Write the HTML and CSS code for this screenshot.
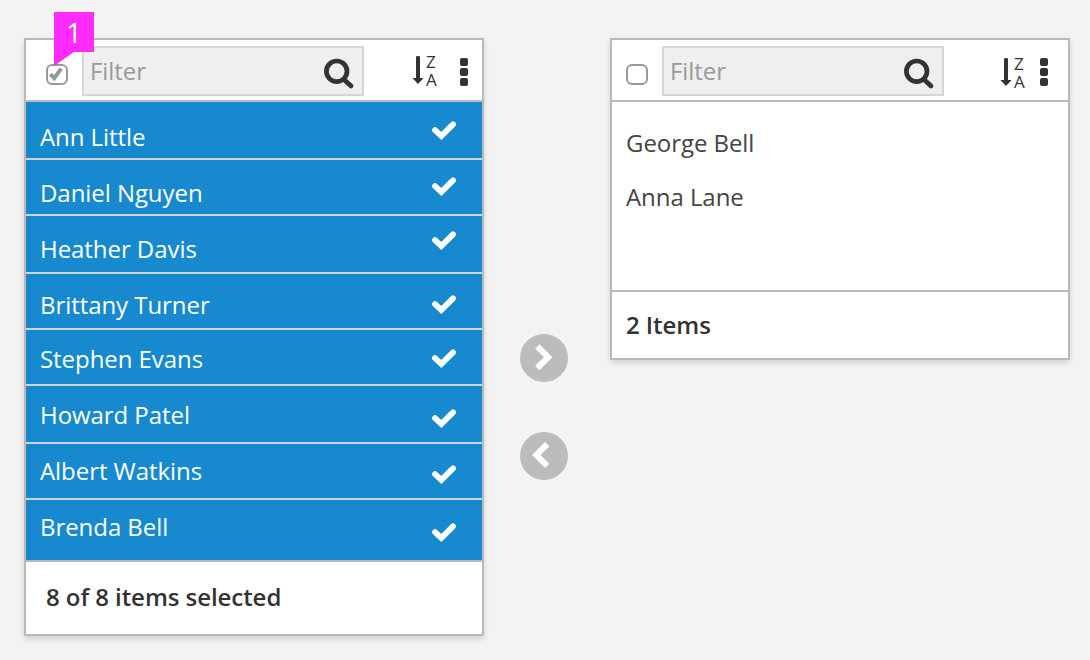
FILE: index.html
```html
<!DOCTYPE html>
<html lang="en">
<head>
<meta charset="utf-8">
<title>List builder</title>
<link rel="stylesheet" href="styles.css">
</head>
<body>
<svg class="defs" aria-hidden="true">
  <symbol id="search" viewBox="0 0 32 32"><circle cx="13.7" cy="13.3" r="10.3" fill="none" stroke="#333" stroke-width="4.7"/><path d="M21 21.4 28 27.9" stroke="#333" stroke-width="4.8" stroke-linecap="round"/></symbol>
  <symbol id="down" viewBox="0 0 12 28"><path d="M5.2 0H6.8Q8 0 8 1.2V22H11.6L6 28 .4 22H4V1.2Q4 0 5.2 0Z" fill="#333"/></symbol>
  <symbol id="check" viewBox="0 0 24 19"><path d="M3 9.2 9.3 15 21 3.4" fill="none" stroke="#fff" stroke-width="5.8" stroke-linecap="round"/></symbol>
</svg>
<main class="builder">
  <section class="panel">
    <header class="bar">
      <span class="box"><svg class="box-tick" viewBox="0 0 14 14"><path d="M1.3 7.2 5.2 11.2 12.2 1.6" fill="none" stroke="#999" stroke-width="4"/></svg></span>
      <div class="filter"><span>Filter</span><svg class="search"><use href="#search"/></svg></div>
      <div class="sort"><svg class="down"><use href="#down"/></svg><div class="letters"><span>Z</span><span>A</span></div></div>
      <div class="kebab"><i></i><i></i><i></i></div>
    </header>
    <ul class="rows">
      <li class="row r1"><span>Ann Little</span><svg class="check"><use href="#check"/></svg></li>
      <li class="row r2"><span>Daniel Nguyen</span><svg class="check"><use href="#check"/></svg></li>
      <li class="row r3"><span>Heather Davis</span><svg class="check"><use href="#check"/></svg></li>
      <li class="row r4"><span>Brittany Turner</span><svg class="check"><use href="#check"/></svg></li>
      <li class="row r5"><span>Stephen Evans</span><svg class="check"><use href="#check"/></svg></li>
      <li class="row r6"><span>Howard Patel</span><svg class="check"><use href="#check"/></svg></li>
      <li class="row r7"><span>Albert Watkins</span><svg class="check"><use href="#check"/></svg></li>
      <li class="row r8"><span>Brenda Bell</span><svg class="check"><use href="#check"/></svg></li>
    </ul>
    <footer class="foot">8 of 8 items selected</footer>
  </section>
  <div class="moves">
    <span class="move"><svg viewBox="0 0 48 48"><path d="M17.3 12.5 28.2 23.2 17.3 34" fill="none" stroke="#fff" stroke-width="6"/></svg></span>
    <span class="move"><svg viewBox="0 0 48 48"><path d="M27.2 12.2 16.3 23 27.2 33.8" fill="none" stroke="#fff" stroke-width="6"/></svg></span>
  </div>
  <section class="panel available">
    <header class="bar">
      <span class="box"></span>
      <div class="filter"><span>Filter</span><svg class="search"><use href="#search"/></svg></div>
      <div class="sort"><svg class="down"><use href="#down"/></svg><div class="letters"><span>Z</span><span>A</span></div></div>
      <div class="kebab"><i></i><i></i><i></i></div>
    </header>
    <ul class="plain"><li>George Bell</li><li>Anna Lane</li></ul>
    <footer class="foot">2 Items</footer>
  </section>
</main>
<div class="marker"><svg viewBox="0 0 40 54"><path d="M0 0H40V40H20L0 54Z" fill="#ff2bff"/></svg><span>1</span></div>
</body>
</html>
```
FILE: styles.css
```css
* { box-sizing: border-box; }
body { margin: 0; height: 660px; overflow: hidden; background: #f3f3f3; font: 24px/32px "Open Sans", sans-serif; letter-spacing: -.06px; color: #444; }
svg { display: block; }
ul { margin: 0; padding: 0; list-style: none; }
.defs { position: absolute; width: 0; height: 0; }
.builder { display: flex; align-items: flex-start; padding: 38px 0 0 24px; }
.panel { width: 460px; border: 2px solid #b9b9b9; background: #fff; box-shadow: 0 3px 6px rgba(0, 0, 0, .14); }
.bar { display: flex; align-items: flex-start; height: 62px; padding: 6px 0 0 20px; border-bottom: 2px solid #b9b9b9; }
.box { width: 22px; height: 21px; margin: 18px 14px 0 0; border: 2px solid #999; border-radius: 6px; }
.box-tick { width: 14px; height: 14px; margin: 1px 0 0 1px; }
.filter { display: flex; justify-content: space-between; width: 282px; height: 50px; padding: 7px 7px 0 6px; border: 2px solid #d6d6d6; background: #efefef; color: #999; }
.search { width: 32px; height: 32px; margin-top: 3px; }
.sort { display: flex; width: 28px; margin: 10px 20px 0 48px; }
.down { width: 12px; height: 28px; }
.letters { display: flex; flex-direction: column; margin: -3px 0 0 2px; font-size: 17px; line-height: 18px; color: #333; }
.kebab { display: flex; flex-direction: column; gap: 2px; margin-top: 12px; }
.kebab i { width: 8px; height: 8px; border-radius: 2px; background: #333; }
.row { display: flex; justify-content: space-between; height: 56px; padding: 0 26px 0 14px; border-bottom: 2px solid #d3d3d3; background: #1789ce; color: #fff; }
.check { width: 24px; height: 19px; }
.r1 { height: 58px; padding-top: 19px; }
.r1 .check { margin-top: 0; }
.r2 { padding-top: 17px; }
.r3 { height: 58px; padding-top: 17px; }
.r3 .check { margin-top: -2px; }
.r4 { padding-top: 15px; }
.r4 .check { margin-top: 6px; }
.r5 { padding-top: 13px; }
.r5 .check { margin-top: 6px; }
.r6 { height: 58px; padding-top: 13px; }
.r6 .check { margin-top: 10px; }
.r7 { padding-top: 11px; }
.r7 .check { margin-top: 10px; }
.r8 { height: 62px; padding-top: 11px; border-color: #b9b9b9; }
.r8 .check { margin-top: 12px; }
.foot { height: 72px; padding: 19px 20px 0; font-weight: 600; color: #333; }
.moves { display: flex; flex-direction: column; gap: 50px; width: 126px; padding: 296px 0 0 36px; }
.move { width: 48px; height: 48px; border-radius: 50%; background: #bcbcbc; }
.available .bar { padding-left: 14px; }
.available .sort { margin: 12px 14px 0 56px; width: 26px; }
.available .plain { height: 190px; padding: 25px 14px 0; border-bottom: 2px solid #b9b9b9; }
.plain li { height: 54px; }
.available .foot { height: 66px; padding: 17px 14px 0; }
.marker { position: absolute; left: 54px; top: 12px; width: 40px; height: 54px; }
.marker span { position: absolute; left: 0; top: 0; width: 40px; line-height: 40px; text-align: center; font-size: 28px; font-weight: 500; color: #fff; }
```
